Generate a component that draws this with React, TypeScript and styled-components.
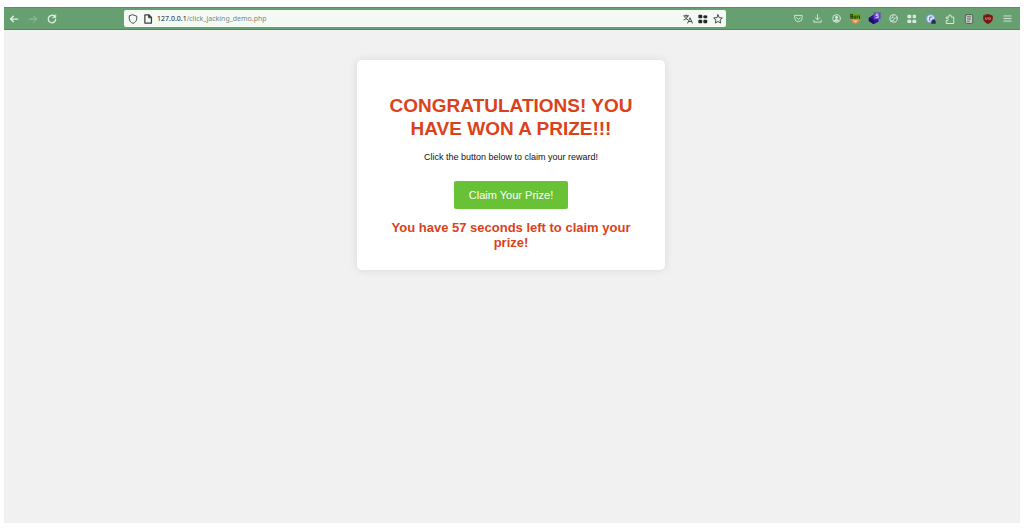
import React, { useState } from "react";
import styled, { createGlobalStyle } from "styled-components";

const GlobalStyle = createGlobalStyle`
  * { box-sizing: border-box; }
  body {
    margin: 0;
    background: #ffffff;
    font-family: "Liberation Sans", Arial, sans-serif;
  }
`;

const Frame = styled.div`
  min-height: 100vh;
  padding: 7px 4px 5px;
  display: flex;
  flex-direction: column;
`;

const Toolbar = styled.header`
  display: grid;
  grid-template-columns: 120fr 602fr 294fr;
  align-items: center;
  height: 23px;
  background: #67a070;
  border-top: 1px solid #5a9163;
  border-bottom: 1px solid #4f8a59;
`;

const NavGroup = styled.nav`
  display: flex;
  gap: 3px;
  padding-left: 2px;
`;

const Extensions = styled.div`
  display: flex;
  justify-content: flex-end;
  gap: 3px;
  padding-right: 5px;
`;

const IconButton = styled.button<{ $faded?: boolean; $dark?: boolean }>`
  display: flex;
  align-items: center;
  justify-content: center;
  width: 16px;
  height: 16px;
  padding: 0;
  border: 0;
  background: none;
  color: ${(p) => (p.$dark ? "#3c423e" : "#e2f0e4")};
  opacity: ${(p) => (p.$faded ? 0.45 : 1)};
`;

const AddressBar = styled.div`
  display: flex;
  align-items: center;
  height: 17px;
  padding: 0 1px;
  border-radius: 2px;
  background: #f3faf4;
`;

const BarGroup = styled.div`
  display: flex;

  & > ${IconButton} {
    width: 15px;
  }
`;

const Host = styled.label`
  padding-left: 2px;
  font-family: "Noto Sans", sans-serif;
  font-size: 7px;
  line-height: 16px;
  color: #1d211e;
`;

const Path = styled.input`
  flex: 1;
  min-width: 0;
  padding: 0;
  border: 0;
  outline: 0;
  background: none;
  font-family: "Noto Sans", sans-serif;
  font-size: 7px;
  line-height: 16px;
  color: #7f8780;
`;

const Page = styled.main`
  flex: 1;
  display: flex;
  justify-content: center;
  align-items: flex-start;
  padding: 30px 18px 30px 16px;
  background: #f1f1f1;
`;

const Card = styled.section`
  display: flex;
  flex-direction: column;
  align-items: center;
  width: 308px;
  padding: 34px 30px 20px;
  border-radius: 5px;
  background: #ffffff;
  box-shadow: 0 0 10px rgba(0, 0, 0, 0.1);
  text-align: center;
`;

const Title = styled.h1`
  margin: 0;
  color: #db421b;
  font-size: 19px;
  line-height: 23px;
`;

const Lead = styled.p`
  margin: 12px 0 18px;
  color: #111111;
  font-size: 9px;
  line-height: 11px;
`;

const ClaimButton = styled.button`
  height: 28px;
  padding: 0 15px;
  border: 0;
  border-radius: 2px;
  background: #69c135;
  color: #ffffff;
  font-family: inherit;
  font-size: 11px;
  line-height: 14px;
`;

const Countdown = styled.h2`
  margin: 11px 0 0;
  color: #db421b;
  font-size: 13px;
  line-height: 15px;
`;

const Svg = styled.svg`
  display: block;
  fill: none;
  stroke: currentColor;
  stroke-width: 1.5;
  stroke-linecap: round;
  stroke-linejoin: round;
`;

type IconProps = { size?: number; children: React.ReactNode };

const Icon = ({ size = 10, children }: IconProps) => (
  <Svg width={size} height={size} viewBox="0 0 16 16" aria-hidden="true">
    {children}
  </Svg>
);

const icons = {
  back: <Icon><path d="M14 8H2.5M7 3.5 2.500 8 7 12.500" strokeWidth="2" /></Icon>,
  forward: <Icon><path d="M2 8h11.500M9 3.500 13.500 8 9 12.500" /></Icon>,
  reload: <Icon><path d="M12.500 4A6 6 0 1 0 14 8.500" strokeWidth="2" /><path d="M14 1.500V6H9.500z" fill="currentColor" strokeWidth="1" /></Icon>,
  shield: <Icon><path d="M8 1.300 14 3.500V7c0 4-2.500 6.500-6 8-3.500-1.500-6-4-6-8V3.500z" /></Icon>,
  page: <Icon><path d="M3 1.500h6.500L13.500 5.500v9H3z" strokeWidth="2" /><path d="M9 1.500V6h4.500z" fill="currentColor" /></Icon>,
  translate: <Icon><path d="M1 3h8M5 1.500V3M7.500 3c-.5 3-2.500 5-6 6.500M2.800 4.500C4 7 5.500 8.300 7.500 9M7.500 14.500 11.200 6 15 14.500M8.800 12h5" /></Icon>,
  tiles: <Icon><path d="M2 2h4v4H2zM10 3h4v3h-4zM2 10h4v4H2zM10 10h4v4h-4z" fill="#161a17" stroke="#161a17" /></Icon>,
  star: <Icon><path d="m8 1.300 2 4.500 4.900.5-3.600 3.300 1 4.900L8 12l-4.300 2.500 1-4.900L1.100 6.300 6 5.800z" /></Icon>,
  pocket: <Icon size={9}><path d="M1.500 2.500h13V7a6.500 6.500 0 0 1-13 0zM4.800 6.500 8 9.500l3.200-3" /></Icon>,
  download: <Icon size={9}><path d="M8 1v9M4.500 6.800 8 10.200l3.500-3.400M1.500 11v3.500h13V11" /></Icon>,
  account: <Icon size={9}><circle cx="8" cy="8" r="6.800" /><circle cx="8" cy="6" r="1.800" fill="currentColor" /><path d="M4.500 12c.3-3 6.700-3 7 0z" fill="currentColor" /></Icon>,
  cookie: <Icon size={9}><circle cx="8" cy="8" r="6.800" /><path d="M8 1.500 6.500 6 10 8l4-3M6.500 6 2 8.500M10 8l-2.500 3.500L10 14M7.500 11.500 4 12" strokeWidth="1.200" /></Icon>,
  grid: <Icon><path d="M2 2h4v4H2zM10.500 2h3v4h-3zM2 10h4v3.500H2zM10 10h4v3.500h-4z" fill="currentColor" /></Icon>,
  puzzle: <Icon><path d="M2 14.500V10.500h1.500a1.700 1.700 0 0 0 0-3.500H2V5h4V3.500a2 2 0 0 1 4 0V5h4v9.500z" /></Icon>,
  menu: <Icon size={9}><path d="M1.500 3.500h13M1.500 8h13M1.500 12.500h13" /></Icon>,
  face: (
    <Icon size={12}>
      <path d="M2 7h13c0 4-3 7.500-6.500 7.500S2 11 2 7z" fill="#d98a4b" stroke="none" />
      <path d="M5 10h7l-3.500 3z" fill="#f6d2a0" stroke="none" />
      <path d="M1 1h14.500v7H1z" fill="#6ba329" stroke="none" />
      <path d="M2.500 2v5h2.500V4.500H2.500M2.500 2H4.500v2.500M7 4v3h2V4M11 7V4h1.500M14 4v3.500" stroke="#26390c" strokeWidth="1.200" />
    </Icon>
  ),
  cube: (
    <Icon size={13}>
      <path d="m1 7 6-4 6 4v5l-6 3-6-4z" fill="#2d1690" stroke="none" />
      <path d="m1 7 6 3v5l-6-4z" fill="#1b0a66" stroke="none" />
      <path d="M7 .5h8.500V9H7z" fill="#6745cf" stroke="none" />
      <path d="M12.500 2.500H10v2h2.500V7H10" stroke="#efeaff" strokeWidth="1" />
    </Icon>
  ),
  privacy: (
    <Icon>
      <circle cx="7.500" cy="7.500" r="6.500" fill="#dce6ff" stroke="#7d9be6" />
      <path d="M6 10.500V5h3.500" stroke="#4668cc" />
      <path d="M9 11h6v4H9zM10.500 11V9h3v2" fill="#28333f" stroke="#28333f" strokeWidth="1" />
    </Icon>
  ),
  notes: (
    <Icon>
      <rect x="2" y="1" width="12" height="14" rx="2" fill="#c5cec7" stroke="#4d5951" />
      <path d="M5.500 4.500h5M5.500 8h5M5.500 11.500h3" stroke="#59635c" />
    </Icon>
  ),
  blocker: (
    <Icon>
      <path d="M8 .8 14.800 3v5c0 3.500-3 5.500-6.800 7.300C4.200 13.500 1.200 11.500 1.200 8V3z" fill="#7c1512" stroke="#7c1512" />
      <path d="M4 6v2.500h2.500V6M9 6h3v2.500H9z" stroke="#d9a5a2" strokeWidth="1" />
    </Icon>
  ),
};

type IconName = keyof typeof icons;

const extensionButtons: { icon: IconName; label: string }[] = [
  { icon: "pocket", label: "Save to Pocket" },
  { icon: "download", label: "Downloads" },
  { icon: "account", label: "Account" },
  { icon: "face", label: "User switcher" },
  { icon: "cube", label: "Inspector" },
  { icon: "cookie", label: "Cookies" },
  { icon: "grid", label: "Containers" },
  { icon: "privacy", label: "Privacy" },
  { icon: "puzzle", label: "Extensions" },
  { icon: "notes", label: "Notes" },
  { icon: "blocker", label: "Content blocker" },
  { icon: "menu", label: "Menu" },
];

export default function App() {
  const [claimed, setClaimed] = useState(false);

  return (
    <Frame>
      <GlobalStyle />
      <Toolbar>
        <NavGroup aria-label="History">
          <IconButton aria-label="Back">{icons.back}</IconButton>
          <IconButton aria-label="Forward" $faded>{icons.forward}</IconButton>
          <IconButton aria-label="Reload">{icons.reload}</IconButton>
        </NavGroup>
        <AddressBar>
          <BarGroup>
            <IconButton $dark aria-label="Tracking protection">{icons.shield}</IconButton>
            <IconButton $dark aria-label="Site information">{icons.page}</IconButton>
          </BarGroup>
          <Host htmlFor="path">127.0.0.1</Host>
          <Path id="path" type="text" defaultValue="/click_jacking_demo.php" spellCheck={false} />
          <BarGroup>
            <IconButton $dark aria-label="Translate">{icons.translate}</IconButton>
            <IconButton $dark aria-label="Tiles">{icons.tiles}</IconButton>
            <IconButton $dark aria-label="Bookmark">{icons.star}</IconButton>
          </BarGroup>
        </AddressBar>
        <Extensions>
          {extensionButtons.map((b) => (
            <IconButton key={b.icon} aria-label={b.label}>{icons[b.icon]}</IconButton>
          ))}
        </Extensions>
      </Toolbar>
      <Page>
        <Card>
          <Title>CONGRATULATIONS! YOU HAVE WON A PRIZE!!!</Title>
          <Lead>Click the button below to claim your reward!</Lead>
          <ClaimButton aria-pressed={claimed} onClick={() => setClaimed(true)}>
            Claim Your Prize!
          </ClaimButton>
          <Countdown>You have 57 seconds left to claim your prize!</Countdown>
        </Card>
      </Page>
    </Frame>
  );
}
